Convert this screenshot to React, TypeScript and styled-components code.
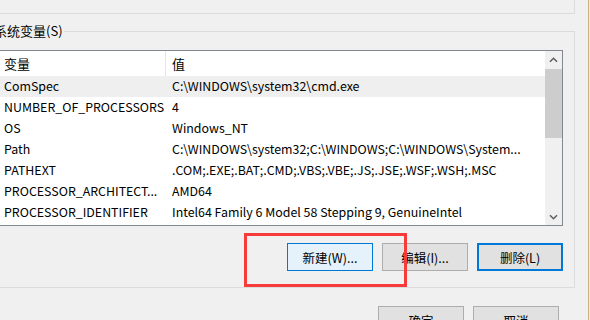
import React from "react";
import styled, { createGlobalStyle } from "styled-components";

const GlobalStyle = createGlobalStyle`
  html, body {
    margin: 0;
    padding: 0;
    background: #e9e9e9;
    overflow: hidden;
  }
  body {
    font-family: "Noto Sans CJK SC", "Noto Sans", sans-serif;
    font-size: 13px;
    color: #000;
  }
`;

const rows = [
  { name: "ComSpec", value: "C:\\WINDOWS\\system32\\cmd.exe", active: true },
  { name: "NUMBER_OF_PROCESSORS", value: "4" },
  { name: "OS", value: "Windows_NT" },
  {
    name: "Path",
    value: "C:\\WINDOWS\\system32;C:\\WINDOWS;C:\\WINDOWS\\System...",
  },
  { name: "PATHEXT", value: ".COM;.EXE;.BAT;.CMD;.VBS;.VBE;.JS;.JSE;.WSF;.WSH;.MSC" },
  { name: "PROCESSOR_ARCHITECT...", value: "AMD64" },
  {
    name: "PROCESSOR_IDENTIFIER",
    value: "Intel64 Family 6 Model 58 Stepping 9, GenuineIntel",
  },
];

function Chevron({ down }: { down?: boolean }) {
  return (
    <svg width="9" height="6" viewBox="0 0 9 6">
      <path
        d={down ? "M1 1.2 L4.5 4.7 L8 1.2" : "M1 4.8 L4.5 1.3 L8 4.8"}
        fill="none"
        stroke="#606060"
        strokeWidth="1.6"
      />
    </svg>
  );
}

function App() {
  return (
    <>
      <GlobalStyle />
      <Window>
        <Content>
          <PrevGroup />
          <GroupBox>
            <Legend>系统变量(S)</Legend>
            <ListView>
              <ListBody>
                <HeaderRow>
                  <NameCell $divider>变量</NameCell>
                  <ValueCell>值</ValueCell>
                </HeaderRow>
                {rows.map((r) => (
                  <Row key={r.name} $active={r.active}>
                    <NameCell>{r.name}</NameCell>
                    <ValueCell>{r.value}</ValueCell>
                  </Row>
                ))}
              </ListBody>
              <ScrollBar>
                <ArrowBox>
                  <Chevron />
                </ArrowBox>
                <Thumb />
                <Track />
                <ArrowBox>
                  <Chevron down />
                </ArrowBox>
              </ScrollBar>
            </ListView>
            <ButtonRow>
              <Button $variant="hover">新建(W)...</Button>
              <Button>编辑(I)...</Button>
              <Button $variant="default">删除(L)</Button>
            </ButtonRow>
          </GroupBox>
          <FooterRow>
            <Button>确定</Button>
            <Button>取消</Button>
          </FooterRow>
        </Content>
        <Highlight />
      </Window>
    </>
  );
}

// the dialog is cropped on the left, so it starts off-screen
const Window = styled.div`
  position: relative;
  display: flex;
  width: 603px;
  height: 320px;
  margin-left: -15px;
  background: #f0f0f0;
  border-right: 1px solid #c9b47e;
  overflow: hidden;
`;

const Content = styled.div`
  flex: 1;
  display: flex;
  flex-direction: column;
  & > * {
    flex: none;
  }
`;

const PrevGroup = styled.div`
  width: 589px;
  height: 13px;
  border-bottom: 1px solid #dcdcdc;
  border-right: 1px solid #dcdcdc;
`;

const GroupBox = styled.div`
  position: relative;
  width: 566px;
  margin-top: 17px;
  padding: 18px 11px 16px 11px;
  border: 1px solid #dcdcdc;
`;

const Legend = styled.span`
  position: absolute;
  top: -10px;
  left: 7px;
  padding: 0 1px;
  background: #f0f0f0;
  line-height: 18px;
`;

const ListView = styled.div`
  display: flex;
  height: 174px;
  border: 1px solid #828790;
  background: #fff;
  overflow: hidden;
  font-size: 12.4px;
`;

const ListBody = styled.div`
  flex: 1;
  min-width: 0;
`;

const HeaderRow = styled.div`
  display: flex;
  height: 25px;
  line-height: 25px;
  font-size: 13px;
`;

const Row = styled.div<{ $active?: boolean }>`
  display: flex;
  height: 21px;
  line-height: 21px;
  background: ${(p) => (p.$active ? "#efefef" : "#fff")};
`;

const NameCell = styled.div<{ $divider?: boolean }>`
  width: 161px;
  padding-left: 6px;
  flex: none;
  white-space: nowrap;
  overflow: hidden;
  border-right: 1px solid ${(p) => (p.$divider ? "#e5e5e5" : "transparent")};
`;

const ValueCell = styled.div`
  flex: 1;
  padding-left: 6px;
  white-space: nowrap;
  overflow: hidden;
`;

const ScrollBar = styled.div`
  width: 17px;
  flex: none;
  display: flex;
  flex-direction: column;
  background: #f0f0f0;
`;

const ArrowBox = styled.div`
  height: 17px;
  display: flex;
  align-items: center;
  justify-content: center;
  flex: none;
`;

const Thumb = styled.div`
  height: 69px;
  margin-top: 1px;
  background: #cdcdcd;
  flex: none;
`;

const Track = styled.div`
  flex: 1;
`;

const ButtonRow = styled.div`
  display: flex;
  justify-content: flex-end;
  gap: 9px;
  margin-top: 17px;
`;

const FooterRow = styled.div`
  display: flex;
  justify-content: flex-end;
  gap: 9px;
  margin-top: 18px;
  padding-right: 29px;
`;

const Button = styled.button<{ $variant?: "hover" | "default" }>`
  box-sizing: border-box;
  width: 86px;
  height: 28px;
  padding: 0;
  font-family: "Noto Sans CJK SC", "Noto Sans", sans-serif;
  font-size: 12.5px;
  color: #000;
  background: ${(p) => (p.$variant === "hover" ? "#e5f1fb" : "#e1e1e1")};
  border: ${(p) =>
    p.$variant === "default"
      ? "2px solid #0078d7"
      : p.$variant === "hover"
      ? "1px solid #0078d7"
      : "1px solid #adadad"};
`;

// red annotation box drawn over the screenshot
const Highlight = styled.div`
  position: absolute;
  left: 259px;
  top: 233px;
  width: 157px;
  height: 48px;
  border: 3px solid #f73b3b;
  pointer-events: none;
`;

export default App;
